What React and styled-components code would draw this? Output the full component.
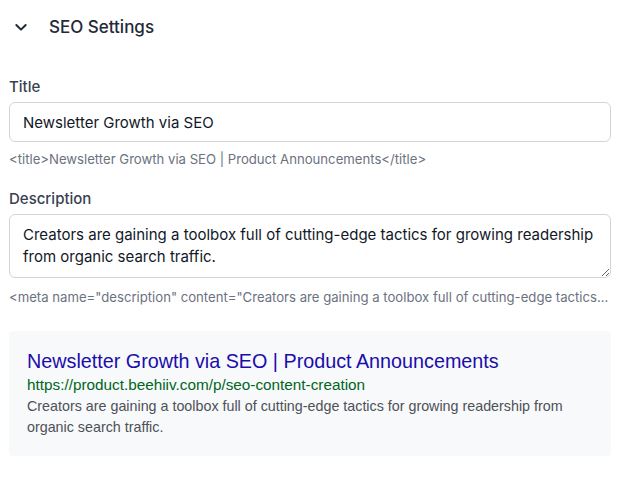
import React from 'react'
import styled, { createGlobalStyle } from 'styled-components'

const GlobalStyle = createGlobalStyle`
    body {
        margin: 0;
        background: #ffffff;
        font-family: Inter, 'Noto Sans', sans-serif;
    }
`

const Panel = styled.div`
    padding: 0 9px;
    width: 602px;
`

const Header = styled.button`
    display: flex;
    align-items: center;
    gap: 20px;
    height: 54px;
    padding: 0 0 0 4px;
    border: none;
    background: none;
    font-family: inherit;
    cursor: pointer;
`

const HeaderTitle = styled.span`
    font-size: 17px;
    font-weight: 500;
    color: #1f2937;
`

const Field = styled.div`
    display: flex;
    flex-direction: column;
    margin-top: ${(props) => props.$top}px;
`

const Label = styled.label`
    font-size: 15px;
    font-weight: 500;
    color: #374151;
    line-height: 20px;
    margin-bottom: 5px;
`

const TextInput = styled.input`
    box-sizing: border-box;
    height: 40px;
    padding: 0 13px;
    border: 1px solid #d1d5db;
    border-radius: 6px;
    font-family: inherit;
    font-size: 15px;
    color: #111827;
    outline: none;
`

const TextArea = styled.textarea`
    box-sizing: border-box;
    height: 64px;
    padding: 9px 13px;
    border: 1px solid #d1d5db;
    border-radius: 6px;
    font-family: inherit;
    font-size: 15px;
    line-height: 22px;
    color: #111827;
    resize: vertical;
    outline: none;
`

const Hint = styled.div`
    margin-top: ${(props) => props.$gap}px;
    font-size: 13.15px;
    line-height: 18px;
    color: #6b7280;
    white-space: nowrap;
    overflow: hidden;
`

const Preview = styled.div`
    margin-top: 25px;
    padding: 17px 18px 18px;
    background: #f8f9fb;
    border-radius: 4px;
    font-family: 'Liberation Sans', Arial, sans-serif;
`

const PreviewTitle = styled.div`
    font-size: 19.75px;
    line-height: 26px;
    color: #1a0dab;
`

const PreviewUrl = styled.div`
    font-size: 15.3px;
    line-height: 22px;
    color: #006621;
`

const PreviewText = styled.div`
    font-size: 14.3px;
    line-height: 21px;
    color: #4d5156;
`

const Chevron = () => (
    <svg width="16" height="16" viewBox="0 0 24 24" fill="none" stroke="#1f2937" strokeWidth="3" strokeLinecap="round" strokeLinejoin="round">
        <path d="M5 9l7 7 7-7" />
    </svg>
)

const title = 'Newsletter Growth via SEO'
const description =
    'Creators are gaining a toolbox full of cutting-edge tactics for growing readership from organic search traffic.'

const App = () => (
    <>
        <GlobalStyle />
        <Panel>
            <Header>
                <Chevron />
                <HeaderTitle>SEO Settings</HeaderTitle>
            </Header>
            <Field $top={23}>
                <Label>Title</Label>
                <TextInput defaultValue={title} />
                <Hint $gap={8}>{`<title>${title} | Product Announcements</title>`}</Hint>
            </Field>
            <Field $top={21}>
                <Label>Description</Label>
                <TextArea defaultValue={description} />
                <Hint $gap={10}>
                    {'<meta name="description" content="Creators are gaining a toolbox full of cutting-edge tactics...'}
                </Hint>
            </Field>
            <Preview>
                <PreviewTitle>{title} | Product Announcements</PreviewTitle>
                <PreviewUrl>https://product.beehiiv.com/p/seo-content-creation</PreviewUrl>
                <PreviewText>{description}</PreviewText>
            </Preview>
        </Panel>
    </>
)

export default App
